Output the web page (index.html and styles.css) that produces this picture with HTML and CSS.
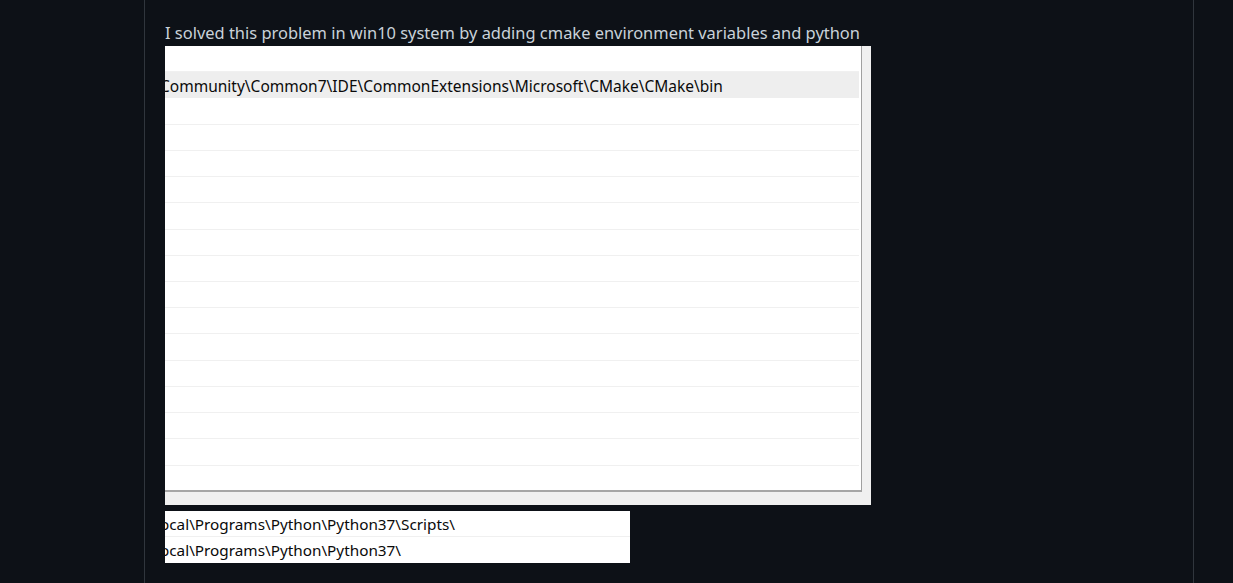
FILE: index.html
```html
<!DOCTYPE html>
<html lang="en">
<head>
<meta charset="utf-8">
<title>Comment</title>
<link rel="stylesheet" href="styles.css">
</head>
<body>
<div class="page">
  <div class="gutter"></div>
  <div class="comment">
    <p class="lead">I solved this problem in win10 system by adding cmake environment variables and python</p>
    <div class="shot dialog">
      <div class="listbox">
        <div class="row"></div>
        <div class="row sel"><span class="cut">Community\Common7\IDE\CommonExtensions\Microsoft\CMake\CMake\bin</span></div>
        <div class="row"></div>
        <div class="row"></div>
        <div class="row"></div>
        <div class="row"></div>
        <div class="row"></div>
        <div class="row"></div>
        <div class="row"></div>
        <div class="row"></div>
        <div class="row"></div>
        <div class="row"></div>
        <div class="row"></div>
        <div class="row"></div>
        <div class="row"></div>
        <div class="row"></div>
        <div class="row last"></div>
      </div>
    </div>
    <div class="shot paths">
      <div class="prow"><span class="cut2">Local\Programs\Python\Python37\Scripts\</span></div>
      <div class="prow last"><span class="cut2">Local\Programs\Python\Python37\</span></div>
    </div>
  </div>
  <div class="rest"></div>
</div>
</body>
</html>
```

FILE: styles.css
```css
html, body {
  margin: 0;
  padding: 0;
  background: #0d1117;
  height: 100%;
}
.page {
  display: flex;
  height: 583px;
  overflow: hidden;
}
.gutter {
  width: 144px;
  flex: none;
}
.comment {
  width: 1050px;
  flex: none;
  border-left: 1px solid #30363d;
  border-right: 1px solid #30363d;
  padding: 20px 0 0 20px;
  box-sizing: border-box;
  display: flex;
  flex-direction: column;
  align-items: flex-start;
}
.rest {
  flex: 1;
}
.lead {
  margin: 0;
  font-family: "Noto Sans", "Open Sans", sans-serif;
  font-size: 16.45px;
  line-height: 26px;
  color: #c9d1d9;
  height: 26px;
  white-space: nowrap;
}
.shot {
  overflow: hidden;
  font-family: "Noto Sans", "Open Sans", sans-serif;
  font-size: 15.5px;
  color: #0a0a0a;
  white-space: nowrap;
}
.dialog {
  width: 706px;
  height: 459px;
  background: #f0f0f0;
}
.listbox {
  width: 697px;
  height: 446px;
  background: #ffffff;
  border-right: 1px solid #a0a0a0;
  border-bottom: 2px solid #a6a6a6;
  padding-right: 2px;
  box-sizing: border-box;
  display: flex;
  flex-direction: column;
}
.row {
  height: 26.23px;
  flex: none;
  box-sizing: border-box;
  border-bottom: 1px solid #f0f0f0;
  display: flex;
  align-items: center;
  padding-top: 2px;
}
.row.sel {
  background: #eeeeee;
  border-bottom-color: #eeeeee;
}
.row.last {
  border-bottom: none;
}
.cut {
  margin-left: -5px;
}
.paths {
  margin-top: 6px;
  width: 465px;
  height: 52px;
  background: #ffffff;
  display: flex;
  flex-direction: column;
}
.prow {
  height: 26px;
  flex: none;
  box-sizing: border-box;
  border-bottom: 1px solid #f0f0f0;
  display: flex;
  align-items: center;
}
.prow.last {
  border-bottom: none;
}
.cut2 {
  margin-left: -13px;
  font-size: 15.3px;
}
```
